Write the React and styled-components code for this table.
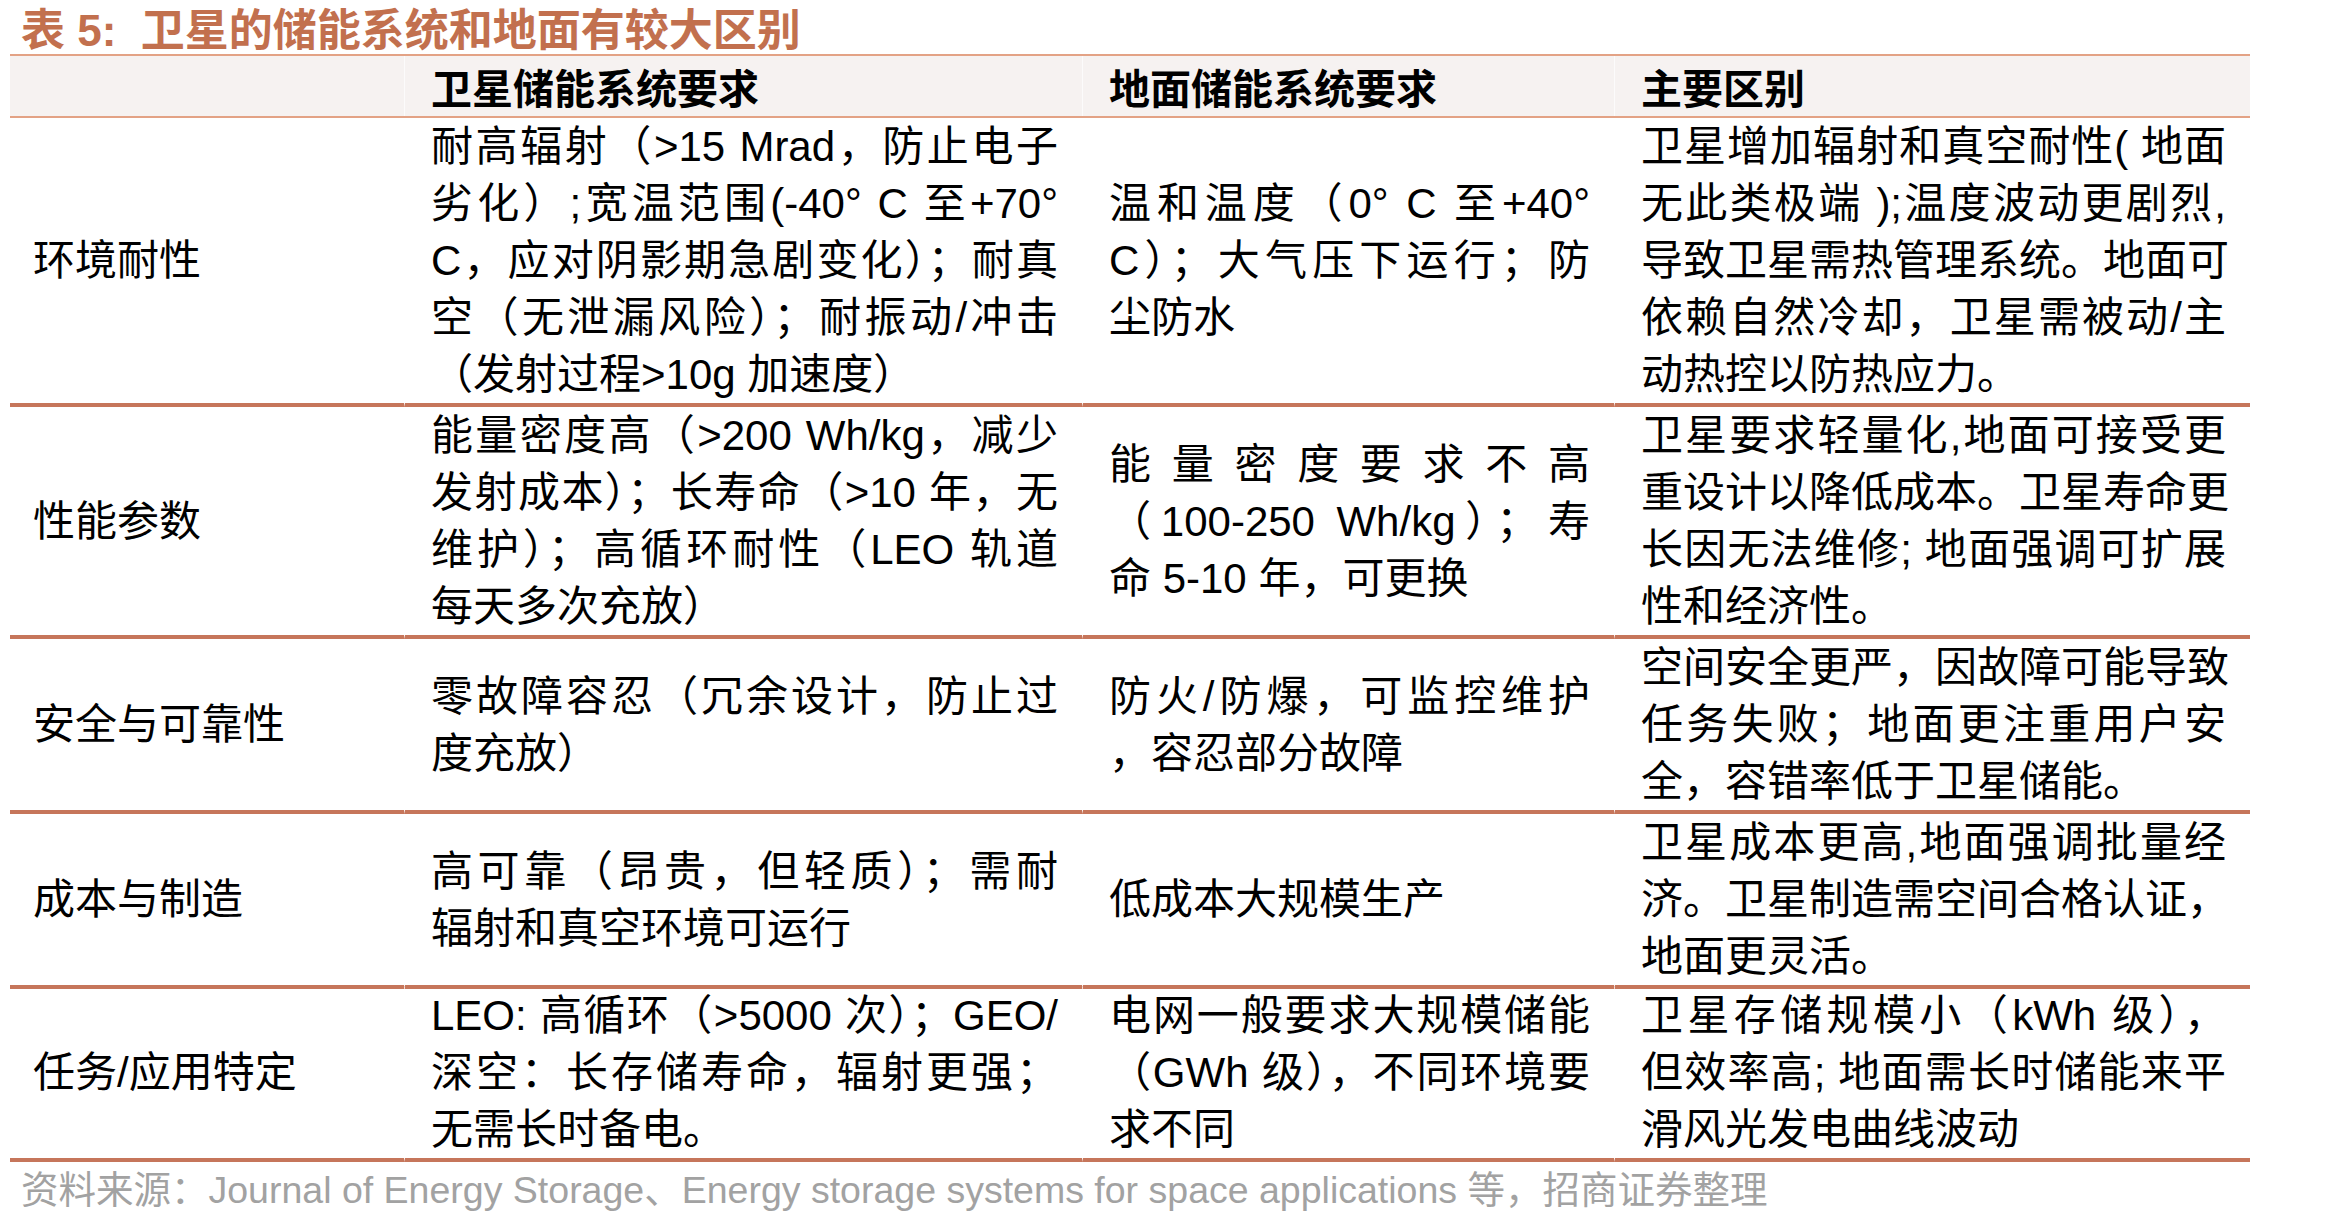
import styled, { createGlobalStyle } from "styled-components";

const GlobalStyle = createGlobalStyle`
  html, body {
    margin: 0;
    padding: 0;
    background: #ffffff;
  }
  body {
    font-family: "Liberation Sans", "Noto Sans CJK SC", sans-serif;
    color: #000000;
  }
`;

const COLS = "394px 678px 532px 636px";

const rows = [
  {
    h: 285,
    label: "环境耐性",
    sat: [
      "耐高辐射（>15 Mrad，防止电子",
      "劣化）;宽温范围(-40° C 至+70°",
      "C，应对阴影期急剧变化）；耐真",
      "空（无泄漏风险）；耐振动/冲击",
      "（发射过程>10g 加速度）",
    ],
    ground: ["温和温度（0° C 至+40°", "C）；大气压下运行；防", "尘防水"],
    diff: [
      "卫星增加辐射和真空耐性( 地面",
      "无此类极端 );温度波动更剧烈,",
      "导致卫星需热管理系统。地面可",
      "依赖自然冷却，卫星需被动/主",
      "动热控以防热应力。",
    ],
  },
  {
    h: 228,
    label: "性能参数",
    sat: [
      "能量密度高（>200 Wh/kg，减少",
      "发射成本）；长寿命（>10 年，无",
      "维护）；高循环耐性（LEO 轨道",
      "每天多次充放）",
    ],
    ground: ["能量密度要求不高", "（100-250 Wh/kg）；寿", "命 5-10 年，可更换"],
    diff: [
      "卫星要求轻量化,地面可接受更",
      "重设计以降低成本。卫星寿命更",
      "长因无法维修; 地面强调可扩展",
      "性和经济性。",
    ],
  },
  {
    h: 171,
    label: "安全与可靠性",
    sat: ["零故障容忍（冗余设计，防止过", "度充放）"],
    ground: ["防火/防爆，可监控维护", "，容忍部分故障"],
    diff: [
      "空间安全更严，因故障可能导致",
      "任务失败；地面更注重用户安",
      "全，容错率低于卫星储能。",
    ],
  },
  {
    h: 169,
    label: "成本与制造",
    sat: ["高可靠（昂贵，但轻质）；需耐", "辐射和真空环境可运行"],
    ground: ["低成本大规模生产"],
    diff: [
      "卫星成本更高,地面强调批量经",
      "济。卫星制造需空间合格认证，",
      "地面更灵活。",
    ],
  },
  {
    h: 170,
    label: "任务/应用特定",
    sat: [
      "LEO: 高循环（>5000 次）；GEO/",
      "深空：长存储寿命，辐射更强；",
      "无需长时备电。",
    ],
    ground: ["电网一般要求大规模储能", "（GWh 级），不同环境要", "求不同"],
    diff: [
      "卫星存储规模小（kWh  级），",
      "但效率高; 地面需长时储能来平",
      "滑风光发电曲线波动",
    ],
  },
];

const Page = styled.div`
  width: 2240px;
  margin-left: 10px;
`;

const Title = styled.h1`
  margin: 0;
  height: 54px;
  padding-left: 11px;
  display: flex;
  align-items: center;
  font-size: 44px;
  font-weight: 700;
  color: #c2704e;
  white-space: nowrap;
`;

const HeaderRow = styled.div`
  display: grid;
  grid-template-columns: ${COLS};
  background: #f6f2f1;
  border-top: 2px solid #e3a285;
  border-bottom: 2px solid #e3a285;
  height: 60px;
`;

const HeaderCell = styled.div`
  display: flex;
  align-items: center;
  padding-left: 26px;
  font-size: 41px;
  font-weight: 700;
  border-left: ${(p) => (p.$first ? "none" : "1px solid rgba(255, 255, 255, 0.7)")};
`;

const Row = styled.div`
  display: grid;
  grid-template-columns: ${COLS};
  height: ${(p) => p.$h + 4}px;
`;

const Cell = styled.div`
  display: flex;
  flex-direction: column;
  justify-content: center;
  padding: 0 24px 0 ${(p) => (p.$label ? 23 : 26)}px;
  border-bottom: 4px solid #c6765b;
  border-left: ${(p) => (p.$label ? "none" : "1px solid rgba(255, 255, 255, 0.6)")};
  font-size: 42px;
  line-height: 57px;
`;

const Line = styled.div`
  white-space: nowrap;
  text-align: justify;
  text-align-last: ${(p) => (p.$last ? "left" : "justify")};
`;

const Source = styled.div`
  padding: 4px 0 0 11px;
  line-height: 50px;
  font-size: 37.5px;
  color: #a2a2a2;
  white-space: nowrap;
`;

const Lines = ({ items }) =>
  items.map((t, i) => (
    <Line key={i} $last={i === items.length - 1}>
      {t}
    </Line>
  ));

export default function App() {
  return (
    <Page lang="zh-CN">
      <GlobalStyle />
      <Title>表 5:&nbsp;&nbsp;卫星的储能系统和地面有较大区别</Title>
      <HeaderRow>
        <HeaderCell $first />
        <HeaderCell>卫星储能系统要求</HeaderCell>
        <HeaderCell>地面储能系统要求</HeaderCell>
        <HeaderCell>主要区别</HeaderCell>
      </HeaderRow>
      {rows.map((r) => (
        <Row key={r.label} $h={r.h}>
          <Cell $label>
            <Line $last>{r.label}</Line>
          </Cell>
          <Cell>
            <Lines items={r.sat} />
          </Cell>
          <Cell>
            <Lines items={r.ground} />
          </Cell>
          <Cell>
            <Lines items={r.diff} />
          </Cell>
        </Row>
      ))}
      <Source>
        资料来源：Journal of Energy Storage、Energy storage systems for space applications 等，招商证券整理
      </Source>
    </Page>
  );
}
